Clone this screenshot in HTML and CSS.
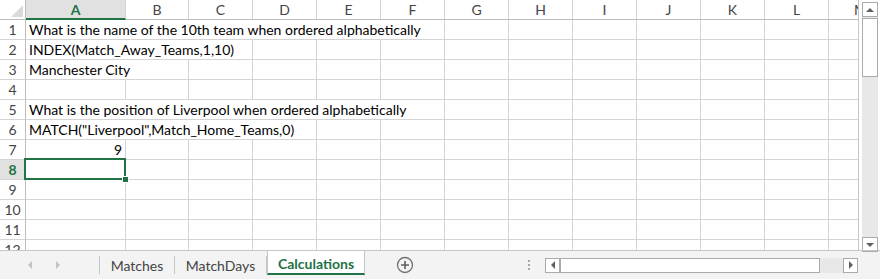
FILE: index.html
```html
<!DOCTYPE html>
<html lang="en">
<head>
  <meta charset="UTF-8">
  <title>Calculations</title>
  <link rel="stylesheet" href="styles.css">
</head>
<body>

<div class="window">
  <div class="main">
    <div class="sheet" id="sheet">
      <!-- cells are built by the script below -->
      <div class="selection"><span class="handle"></span></div>
    </div>

    <div class="vscroll">
      <div class="sb-btn"><span class="tri tri-up"></span></div>
      <div class="vthumb"></div>
      <div class="vtrack"></div>
      <div class="sb-btn"><span class="tri tri-down"></span></div>
    </div>
  </div>

  <div class="tabbar">
    <div class="tab-nav">
      <span class="tri tri-left light"></span>
      <span class="tri tri-right light"></span>
    </div>
    <div class="tab">Matches</div>
    <div class="tab">MatchDays</div>
    <div class="tab active">Calculations</div>
    <div class="tab-rest">
      <div class="add-sheet">
        <svg width="18" height="18" viewBox="0 0 18 18">
          <circle cx="9" cy="9" r="7.5" fill="none" stroke="#707070" stroke-width="1.3"/>
          <path d="M9 5v8M5 9h8" stroke="#606060" stroke-width="1.6"/>
        </svg>
      </div>
      <div class="dots"><i></i><i></i><i></i></div>
      <div class="hscroll">
        <div class="sb-btn"><span class="tri tri-left"></span></div>
        <div class="hthumb"></div>
        <div class="htrack"></div>
        <div class="sb-btn"><span class="tri tri-right"></span></div>
      </div>
    </div>
  </div>
</div>

<script>
  const sheet = document.getElementById('sheet');
  const cols = ['A', 'B', 'C', 'D', 'E', 'F', 'G', 'H', 'I', 'J', 'K', 'L', 'M'];

  // row number -> [text, columns the text runs over, alignment]
  const data = {
    1: ['What is the name of the 10th team when ordered alphabetically', 6],
    2: ['INDEX(Match_Away_Teams,1,10)', 3],
    3: ['Manchester City', 2],
    5: ['What is the position of Liverpool when ordered alphabetically', 6],
    6: ['MATCH("Liverpool",Match_Home_Teams,0)', 4],
    7: ['9', 1, 'num']
  };

  function cell(cls, text, span) {
    const div = document.createElement('div');
    div.className = cls;
    if (text) div.textContent = text;
    if (span > 1) div.style.gridColumn = 'span ' + span;
    sheet.appendChild(div);
  }

  cell('corner');
  cols.forEach(c => cell(c === 'A' ? 'col-head current' : 'col-head', c));

  for (let r = 1; r <= 12; r++) {
    cell(r === 8 ? 'row-head current' : 'row-head', String(r));
    let start = 0;
    if (data[r]) {
      const [text, span, align] = data[r];
      cell(align === 'num' ? 'cell num' : 'cell', text, span);
      start = span;
    }
    for (let i = start; i < cols.length; i++) cell('cell');
  }
</script>

</body>
</html>
```

FILE: styles.css
```css
body {
  margin: 0;
  background-color: #ffffff;
  font-family: "Lato", "Liberation Sans", sans-serif;
}

.window {
  width: 880px;
  height: 279px;
  overflow: hidden;
}

.main {
  display: flex;
  height: 251px;
}

/* grid */

.sheet {
  position: relative;
  display: grid;
  grid-template-columns: 26px 100px 63px repeat(10, 64px) 64px;
  grid-auto-rows: 20px;
  width: 858px;
  height: 250px;
  overflow: hidden;
  border-right: 1px solid #c6c6c6;
  border-bottom: 1px solid #c6c6c6;
}

.corner, .col-head, .row-head, .cell {
  box-sizing: border-box;
  border-right: 1px solid #d4d4d4;
  border-bottom: 1px solid #d4d4d4;
  white-space: nowrap;
  overflow: hidden;
}

.corner {
  position: relative;
  border-right-color: #bdbdbd;
  border-bottom-color: #bdbdbd;
}

.corner::after {
  content: "";
  position: absolute;
  right: 2px;
  bottom: 2px;
  border-left: 12px solid transparent;
  border-bottom: 12px solid #dadada;
}

.col-head {
  border-bottom-color: #bdbdbd;
  color: #444444;
  font-size: 14px;
  line-height: 19px;
  text-align: center;
}

.col-head.current {
  background-color: #e1e1e1;
  border-bottom: 2px solid #217346;
  color: #217346;
  font-weight: bold;
}

.row-head {
  border-right-color: #bdbdbd;
  color: #444444;
  font-size: 14px;
  line-height: 20px;
  text-align: center;
}

.row-head.current {
  background-color: #e1e1e1;
  color: #217346;
  font-weight: bold;
}

.cell {
  padding: 0 3px;
  color: #000000;
  font-size: 14px;
  line-height: 20px;
}

.cell.num {
  text-align: right;
}

.selection {
  position: absolute;
  left: 24px;
  top: 158px;
  width: 98px;
  height: 18px;
  border: 2px solid #217346;
}

.handle {
  position: absolute;
  right: -5px;
  bottom: -5px;
  width: 5px;
  height: 5px;
  background-color: #217346;
  border: 1px solid #ffffff;
}

/* scrollbars */

.vscroll {
  display: flex;
  flex-direction: column;
  width: 16px;
  margin: 2px 0 0 3px;
  height: 250px;
  background-color: #e8e8e8;
}

.sb-btn {
  box-sizing: border-box;
  display: flex;
  justify-content: center;
  align-items: center;
  width: 16px;
  height: 15px;
  background-color: #ffffff;
  border: 1px solid #ababab;
}

.vthumb {
  box-sizing: border-box;
  height: 59px;
  margin-top: 1px;
  background-color: #ffffff;
  border: 1px solid #ababab;
}

.vtrack {
  flex: 1;
}

.tri {
  width: 0;
  height: 0;
}

.tri-up {
  border-left: 4px solid transparent;
  border-right: 4px solid transparent;
  border-bottom: 4px solid #606060;
}

.tri-down {
  border-left: 4px solid transparent;
  border-right: 4px solid transparent;
  border-top: 4px solid #606060;
}

.tri-left {
  border-top: 4px solid transparent;
  border-bottom: 4px solid transparent;
  border-right: 4px solid #606060;
}

.tri-right {
  border-top: 4px solid transparent;
  border-bottom: 4px solid transparent;
  border-left: 4px solid #606060;
}

.tri.light.tri-left { border-right-color: #c4c4c4; }
.tri.light.tri-right { border-left-color: #c4c4c4; }

/* sheet tabs */

.tabbar {
  display: flex;
  height: 28px;
  background-color: #f3f3f3;
  font-size: 14px;
}

.tab-nav {
  display: flex;
  align-items: center;
  gap: 24px;
  width: 100px;
  padding-left: 28px;
  box-sizing: border-box;
  border-right: 1px solid #c6c6c6;
  margin: 5px 0 5px;
}

.tab {
  display: flex;
  align-items: center;
  justify-content: center;
  box-sizing: border-box;
  color: #444444;
  border-right: 1px solid #c6c6c6;
  margin: 5px 0 5px;
}

.tab:nth-child(2) { width: 75px; }
.tab:nth-child(3) { width: 92px; }

.tab.active {
  width: 98px;
  margin: -1px 0 0;
  padding-top: 3px;
  height: 25px;
  background-color: #ffffff;
  color: #217346;
  font-weight: bold;
  border-left: 1px solid #c6c6c6;
  border-bottom: 2px solid #217346;
}

.tab-rest {
  flex: 1;
  display: flex;
  align-items: center;
  border-top: 1px solid #c6c6c6;
  margin-top: -1px;
}

.add-sheet {
  display: flex;
  margin-left: 31px;
}

.dots {
  display: flex;
  flex-direction: column;
  gap: 2px;
  margin-left: 114px;
}

.dots i {
  width: 2px;
  height: 2px;
  background-color: #a8a8a8;
}

.hscroll {
  display: flex;
  height: 15px;
  margin-left: 15px;
  width: 313px;
  background-color: #e8e8e8;
}

.hscroll .sb-btn {
  width: 15px;
  height: 15px;
}

.hthumb {
  box-sizing: border-box;
  width: 260px;
  background-color: #ffffff;
  border: 1px solid #ababab;
}

.htrack {
  flex: 1;
}
```
